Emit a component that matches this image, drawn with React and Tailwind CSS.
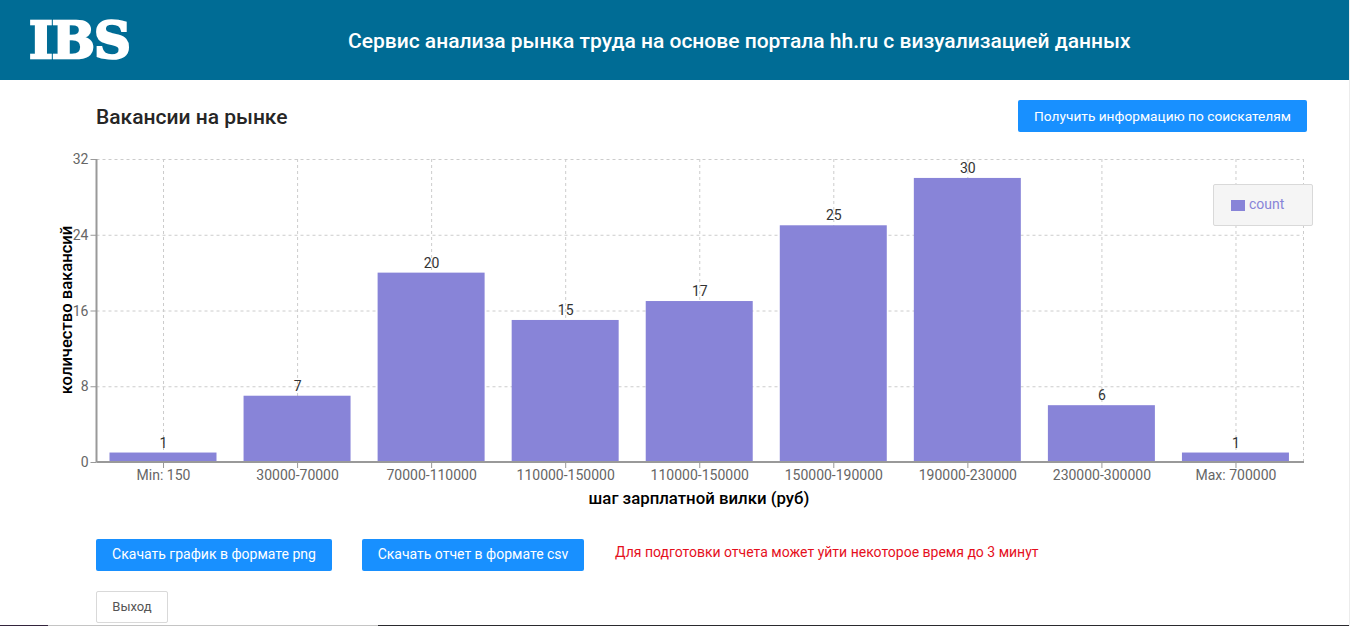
import React from "react";

const roboto = "font-['Roboto',sans-serif]";

const data = [
	{ label: "Min: 150", value: 1 },
	{ label: "30000-70000", value: 7 },
	{ label: "70000-110000", value: 20 },
	{ label: "110000-150000", value: 15 },
	{ label: "110000-150000", value: 17 },
	{ label: "150000-190000", value: 25 },
	{ label: "190000-230000", value: 30 },
	{ label: "230000-300000", value: 6 },
	{ label: "Max: 700000", value: 1 },
];

// plot area, in svg coordinates (the svg starts at y=150 on the page)
const left = 96.5;
const right = 1303;
const top = 9;
const bottom = 312;
const band = (right - left) / data.length;
const yOf = (v) => bottom - (v / 32) * (bottom - top);

const Chart = () => (
	<svg width="1349" height="365" className="block" fontFamily="Roboto, sans-serif">
		{/* grid */}
		<g stroke="#cccccc" strokeDasharray="3 3" fill="none">
			{[8, 16, 24, 32].map((v) => (
				<line key={v} x1={left} x2={right} y1={yOf(v) + 0.5} y2={yOf(v) + 0.5} />
			))}
			{data.map((d, i) => (
				<line key={i} x1={left + band * (i + 0.5)} x2={left + band * (i + 0.5)} y1={top} y2={bottom} />
			))}
			<line x1={right + 0.5} x2={right + 0.5} y1={top} y2={bottom} />
		</g>

		{/* bars */}
		{data.map((d, i) => (
			<rect
				key={i}
				x={left + band * i + 13}
				y={yOf(d.value)}
				width={107}
				height={bottom - yOf(d.value)}
				fill="#8884d8"
			/>
		))}

		{/* axes */}
		<g stroke="#999999" fill="none">
			<line x1={left} x2={left} y1={top} y2={bottom} strokeWidth="2" />
			<line x1={left} x2={right + 1} y1={bottom} y2={bottom} strokeWidth="2" />
			{[0, 8, 16, 24, 32].map((v) => (
				<line key={v} x1={left - 6} x2={left} y1={yOf(v) + 0.5} y2={yOf(v) + 0.5} />
			))}
			{data.map((d, i) => (
				<line key={i} x1={left + band * (i + 0.5)} x2={left + band * (i + 0.5)} y1={bottom} y2={bottom + 6} />
			))}
		</g>

		{/* tick labels */}
		<g fontSize="14" fill="#666666">
			{[0, 8, 16, 24, 32].map((v) => (
				<text key={v} x={left - 8} y={yOf(v) + 5} textAnchor="end">{v}</text>
			))}
			{data.map((d, i) => (
				<text key={i} x={left + band * (i + 0.5)} y={330} textAnchor="middle">{d.label}</text>
			))}
		</g>

		{/* bar values */}
		<g fontSize="14" fill="#333333">
			{data.map((d, i) => (
				<text key={i} x={left + band * (i + 0.5)} y={yOf(d.value) - 5} textAnchor="middle">{d.value}</text>
			))}
		</g>

		{/* axis titles */}
		<text x="699" y="354" textAnchor="middle" fontSize="16.8" fontWeight="500" fill="#000000">
			шаг зарплатной вилки (руб)
		</text>
		<text
			transform="translate(72 160) rotate(-90)"
			textAnchor="middle"
			fontSize="16.6"
			fontWeight="500"
			fill="#000000"
		>
			количество вакансий
		</text>
	</svg>
);

const App = () => {
	return (
		<div className={`${roboto} w-[1350px] h-[626px] overflow-hidden bg-white flex flex-col border-r border-[#ececec]`}>
			{/* Header */}
			<header className="h-20 shrink-0 bg-[#006c95] flex items-center pl-[29px]">
				<div className="w-[103px] font-['DejaVu_Serif',serif] font-bold text-[51px] leading-none text-white tracking-[-1px] [-webkit-text-stroke:2.5px_white]">
					IBS
				</div>
				<h1 className="ml-[216px] mt-[3px] text-[21px] font-medium text-white">
					Сервис анализа рынка труда на основе портала hh.ru с визуализацией данных
				</h1>
			</header>

			{/* Title row */}
			<div className="h-[70px] shrink-0 pt-5 pl-24 pr-[42px] flex items-start justify-between">
				<h2 className="text-[21px] font-medium leading-[34px] text-[#262626]">Вакансии на рынке</h2>
				<button className="h-8 w-[289px] rounded-[2px] bg-[#1890ff] text-[13.7px] text-white">
					Получить информацию по соискателям
				</button>
			</div>

			{/* Chart */}
			<div className="relative h-[389px] shrink-0">
				<Chart />
				<div className="absolute left-[1213px] top-[34px] w-[100px] h-[42px] flex items-center pl-[17px] pb-[2px] gap-1 rounded-[2px] border border-[#d9d9d9] bg-[#f5f5f5] text-sm text-[#8884d8]">
					<span className="w-[14px] h-[11px] mt-[2px] bg-[#8884d8]"></span>
					<span>count</span>
				</div>
			</div>

			{/* Download buttons */}
			<div className="h-[52px] shrink-0 pl-24 flex items-start">
				<button className="h-8 w-[236px] pb-[2px] rounded-[2px] bg-[#1890ff] text-sm text-white">
					Скачать график в формате png
				</button>
				<button className="ml-[30px] h-8 w-[222px] pb-[2px] rounded-[2px] bg-[#1890ff] text-sm text-white">
					Скачать отчет в формате csv
				</button>
				<p className="ml-[31px] mt-[3px] text-sm text-[#e5101d]">
					Для подготовки отчета может уйти некоторое время до 3 минут
				</p>
			</div>

			{/* Exit */}
			<div className="pl-24">
				<button className="h-8 w-[72px] rounded-[2px] border border-[#d9d9d9] bg-white text-[13px] text-[#555555]">
					Выход
				</button>
			</div>

			{/* Bottom edge of the window */}
			<div className="mt-[2px] h-px shrink-0 flex">
				<div className="w-12 bg-[#33243c]"></div>
				<div className="w-[330px] bg-[#c4c4c4]"></div>
				<div className="flex-1 bg-[#2a2a2e]"></div>
			</div>
		</div>
	);
};

export default App;
